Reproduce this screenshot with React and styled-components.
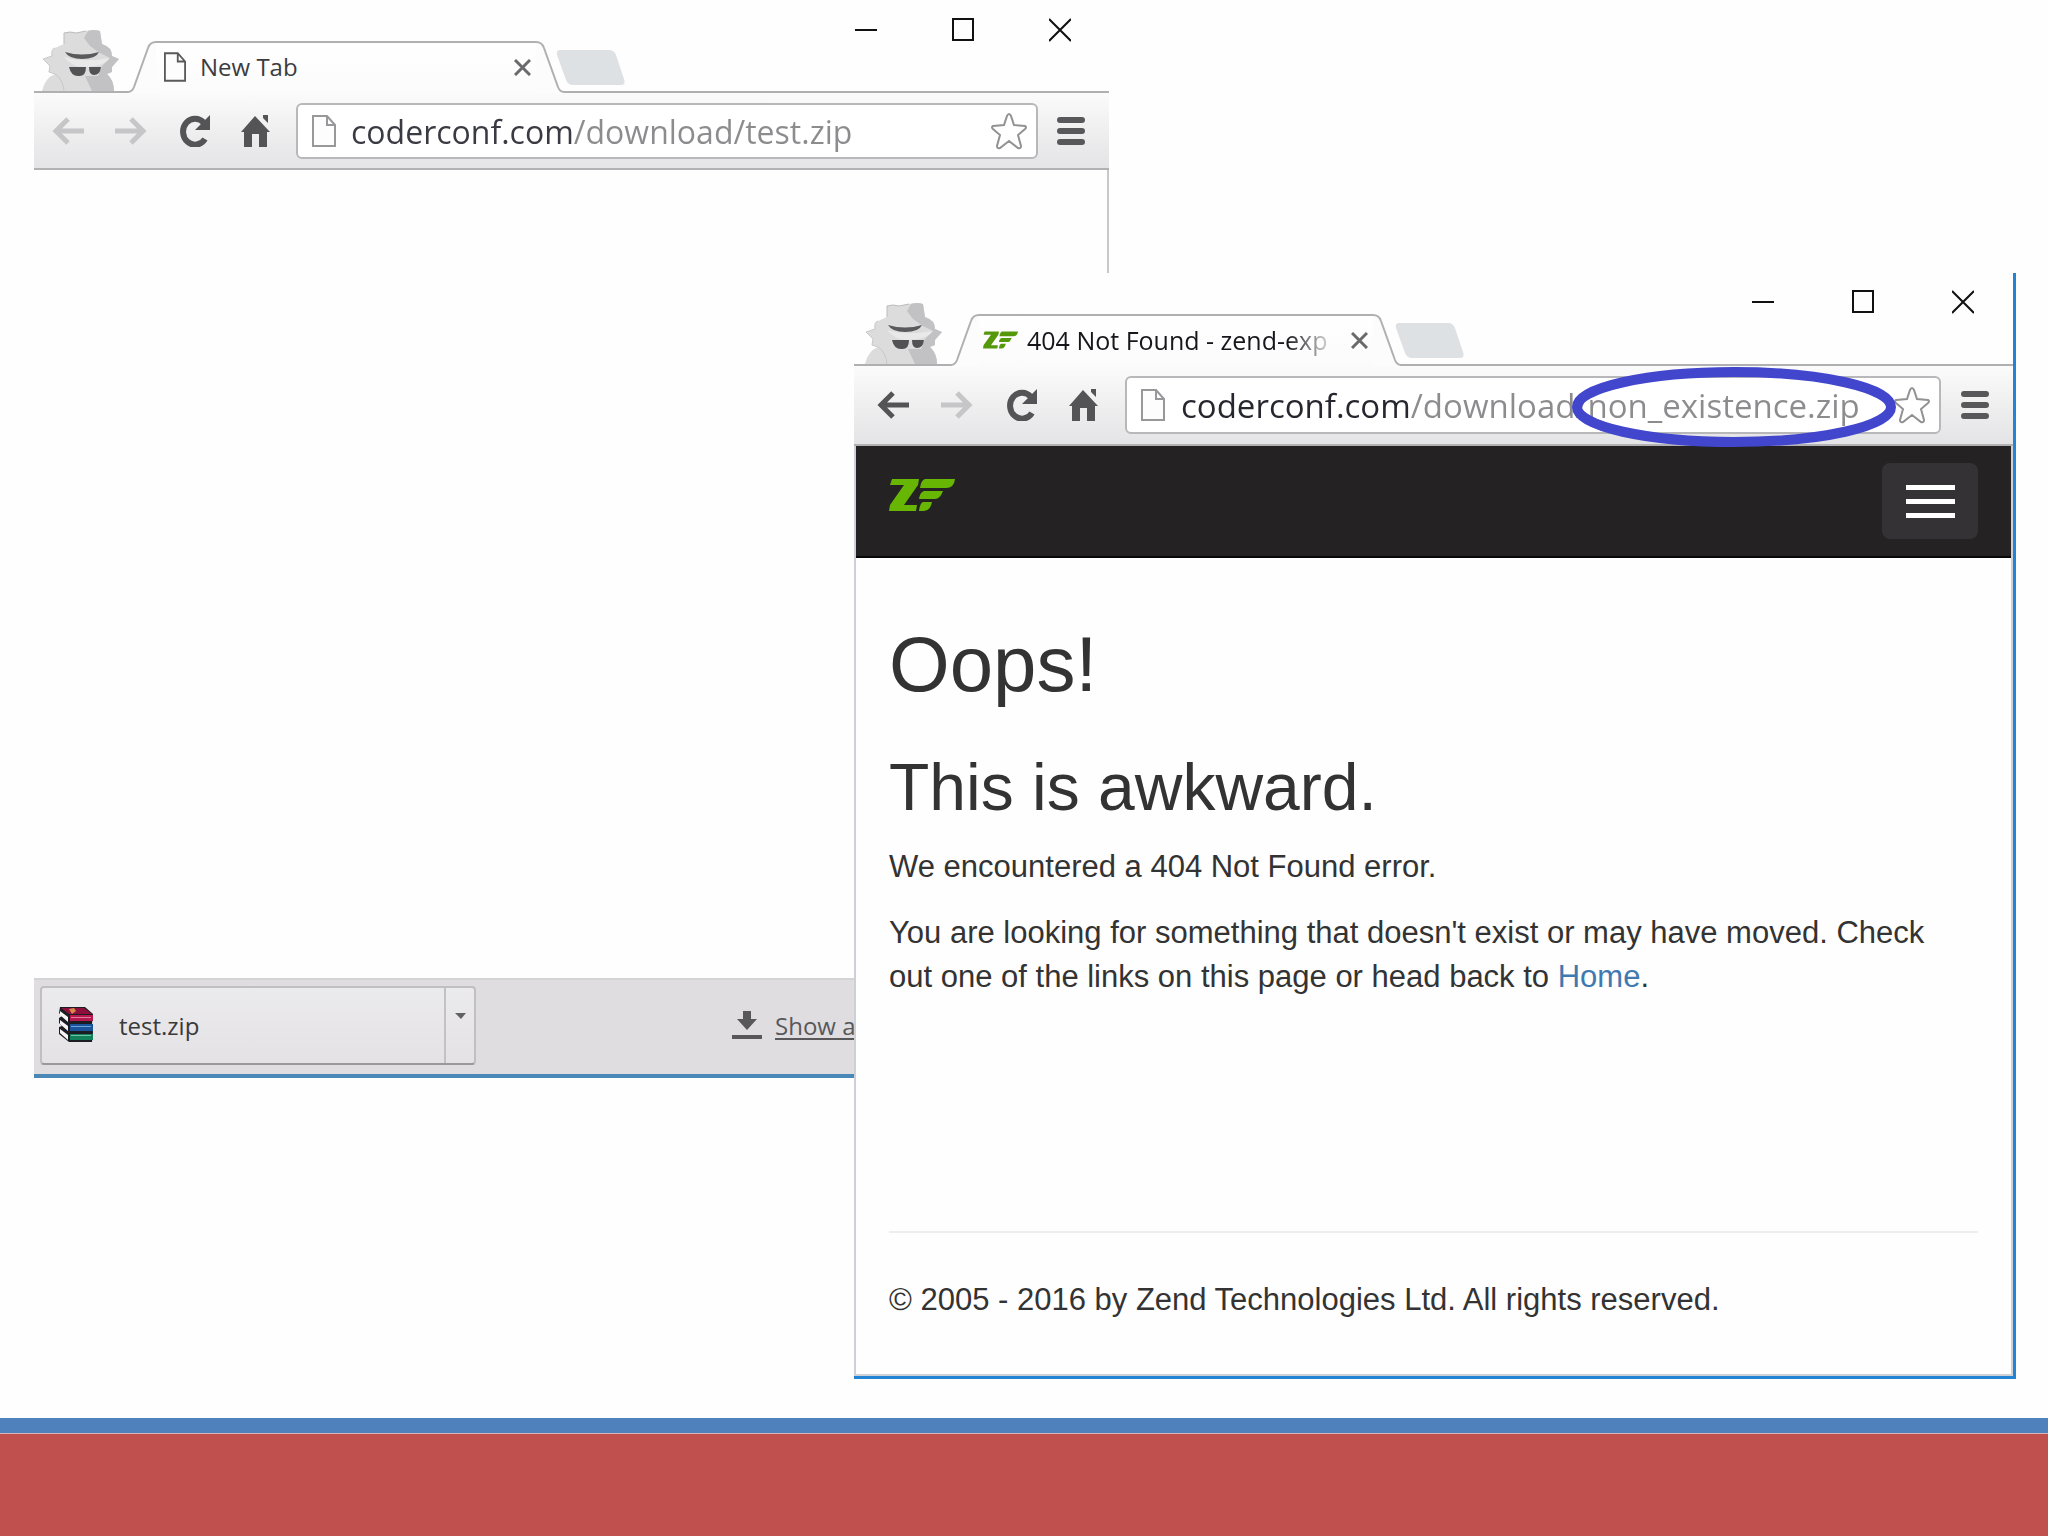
import styled, { createGlobalStyle } from "styled-components";

const GlobalStyle = createGlobalStyle`
  *, *::before, *::after {
    box-sizing: border-box;
  }

  body {
    margin: 0;
    background: #fefefe;
  }

  button {
    padding: 0;
    border: none;
    background: none;
    cursor: pointer;
  }

  svg {
    display: block;
  }
`;

const uiFont = `"Open Sans", "Noto Sans", sans-serif`;
const pageFont = `"Liberation Sans", Arial, sans-serif`;

// Slide
const Slide = styled.div`
  display: flex;
  flex-direction: column;
  min-height: 100vh;
`;

const Canvas = styled.main`
  position: relative;
  flex: 1;
  overflow: hidden;
`;

const Band = styled.footer`
  height: 118px;
  background: #c0504d;
  border-top: 15px solid #4f81bd;
  box-shadow: inset 0 1px 0 #d9b3bb;
`;

// Browser window
const Window = styled.section`
  position: absolute;
  display: flex;
  flex-direction: column;
  background: #fefefe;
  font-family: ${uiFont};
`;

const BackWindow = styled(Window)`
  top: 0;
  left: 34px;
  width: 52.5%;
  height: 76%;
  border-bottom: 4px solid #4a88b8;
`;

const FrontWindow = styled(Window)`
  top: 273px;
  left: 41.7%;
  right: 32px;
  bottom: 39px;
  border-right: 3px solid #2383d5;
  border-bottom: 3px solid #2383d5;
`;

const TitleBar = styled.header`
  display: flex;
  align-items: flex-end;
  height: 93px;
  padding-left: ${(props) => (props.$large ? "11px" : "8px")};
  border-bottom: 2px solid #b0b0b2;
`;

const Tab = styled.div`
  display: flex;
  width: ${(props) => (props.$large ? "450px" : "436px")};
  height: 52px;
  margin-left: 8px;
  margin-bottom: -2px;
`;

const TabBody = styled.div`
  flex: 1;
  min-width: 0;
  display: flex;
  align-items: center;
  gap: ${(props) => (props.$large ? "9px" : "14px")};
  padding: 0 5px 2px ${(props) => (props.$large ? "4px" : "8px")};
  border-top: 2px solid #b0b0b2;
  background: linear-gradient(#ffffff, #fbfbfb);
`;

const TabTitle = styled.span`
  flex: 1;
  overflow: hidden;
  white-space: nowrap;
  font-size: ${(props) => (props.$faded ? "25px" : "24px")};
  line-height: 32px;
  color: ${(props) => (props.$faded ? "#16161c" : "#3c3c40")};
  mask-image: ${(props) =>
    props.$faded
      ? "linear-gradient(to right, #000 260px, rgba(0, 0, 0, 0.2) 300px)"
      : "none"};
`;

const NewTabButton = styled.button`
  margin: 0 0 6px ${(props) => (props.$large ? "-6px" : "-8px")};
`;

const WindowControls = styled.div`
  align-self: flex-start;
  display: flex;
  gap: ${(props) => (props.$large ? "78px" : "75px")};
  margin-left: auto;
  padding: ${(props) => (props.$large ? "17px 39px 0 0" : "18px 38px 0 0")};
`;

const Toolbar = styled.div`
  display: flex;
  align-items: center;
  gap: ${(props) => (props.$large ? "32px" : "31px")};
  padding: 10px 24px ${(props) => (props.$large ? "10px" : "9px")}
    ${(props) => (props.$large ? "23px" : "18px")};
  border-bottom: 2px solid #b2b2b4;
  background: linear-gradient(#fbfbfb, #e4e3e5);
`;

const AddressBar = styled.label`
  flex: 1;
  min-width: 0;
  display: flex;
  align-items: center;
  gap: ${(props) => (props.$large ? "16px" : "15px")};
  height: ${(props) => (props.$large ? "58px" : "56px")};
  margin: 0 -12px 0 -6px;
  padding: 0 8px 0 14px;
  border: 2px solid #b8b8ba;
  border-radius: 6px;
  background: #ffffff;
`;

// The host is dark and the path grey, so the text is filled by a two-tone gradient
const AddressInput = styled.input`
  flex: 1;
  min-width: 0;
  height: 48px;
  padding: 0;
  border: none;
  outline: none;
  font-family: ${uiFont};
  font-size: ${(props) => (props.$large ? "33px" : "32px")};
  color: #8c8c8e;
  -webkit-text-fill-color: transparent;
  background: ${(props) =>
    props.$large
      ? "linear-gradient(to right, #26262e 230px, #8c8c8e 230px)"
      : "linear-gradient(to right, #3a3a42 223px, #8c8c8e 223px)"};
  background-clip: text;
`;

const Highlight = styled.svg`
  position: absolute;
  top: 94px;
  right: 117px;
  pointer-events: none;
`;

const BlankPage = styled.div`
  flex: 1;
  border-right: 2px solid #c8c8ca;
`;

// Download shelf
const DownloadShelf = styled.div`
  display: flex;
  align-items: center;
  height: 96px;
  padding: 6px 6px 9px;
  border-top: 2px solid #d4d3d5;
  background: #dfdde0;
`;

const DownloadItem = styled.div`
  display: flex;
  width: 436px;
  height: 79px;
  border: 2px solid #c0bfc1;
  border-bottom-color: #99989a;
  border-radius: 4px;
  background: linear-gradient(#ebeaec, #e4e2e4);
`;

const FileButton = styled.button`
  flex: 1;
  display: flex;
  align-items: center;
  gap: 25px;
  padding-left: 17px;
  font-family: ${uiFont};
  font-size: 24px;
  color: #3a3a3c;
`;

const CaretButton = styled.button`
  display: flex;
  justify-content: center;
  width: 30px;
  padding-top: 25px;
  border-left: 2px solid #c2c1c3;
`;

const ShowAllLink = styled.a`
  display: flex;
  align-items: center;
  gap: 13px;
  margin-left: 256px;
  font-size: 24px;
  color: #58585a;
  white-space: nowrap;
  text-underline-offset: 3px;
`;

// Error page
const Page = styled.div`
  flex: 1;
  display: flex;
  flex-direction: column;
  border: 2px solid #cdd0d4;
  border-top: none;
  font-family: ${pageFont};
  color: #333333;
`;

const NavBar = styled.nav`
  display: flex;
  align-items: flex-start;
  justify-content: space-between;
  height: 112px;
  padding: 17px 33px;
  border-bottom: 2px solid #080808;
  background: #242223;
`;

const Brand = styled.a`
  padding-top: 16px;
`;

const MenuToggle = styled.button`
  display: flex;
  flex-direction: column;
  align-items: center;
  justify-content: center;
  gap: 9px;
  width: 96px;
  height: 76px;
  border-radius: 8px;
  background: #343235;
`;

const MenuLine = styled.span`
  width: 49px;
  height: 5px;
  background: #ffffff;
`;

const Content = styled.article`
  flex: 1;
  display: flex;
  flex-direction: column;
  padding: 63px 33px 52px;
`;

const Title = styled.h1`
  margin: 0 0 44px;
  font-size: 78px;
  font-weight: 400;
  line-height: 86px;
`;

const Subtitle = styled.h2`
  margin: 0 0 22px;
  font-size: 66px;
  font-weight: 400;
  line-height: 72px;
`;

const Paragraph = styled.p`
  margin: 0 0 22px;
  padding-right: 12px;
  font-size: 31px;
  line-height: 44px;
`;

const HomeLink = styled.a`
  color: #4079b0;
  text-decoration: none;
`;

const Copyright = styled.div`
  margin-top: auto;
  padding-top: 45px;
  border-top: 2px solid #eeeeee;
  font-size: 31px;
  line-height: 44px;
`;

// Icons
function IncognitoIcon() {
  return (
    <svg width="78" height="61" viewBox="0 0 78 61" aria-hidden="true">
      <path d="M0 61 Q3 48 13 44 L7 42 L8 36 L1 29 L10 26 Q9 19 13 18 L22 14 L22 3 Q28 1 34 3 Q40 2 44 1 Q52 -1 58 1 L60 14 Q70 17 70 26 L77 29 L70 37 L70 42 L65 44 Q72 50 72 61 Z" fill="#dcdcdd" />
      <path d="M46 1 Q52 -1 58 1 L60 14 Q70 17 70 26 L77 29 L70 37 L70 42 L65 44 Q72 50 72 61 H50 L43 46 H56 L60 36 L68 28 L58 23 L48 16 L42 8 Z" fill="#c2c2c4" />
      <path d="M22 27 Q42 33 67 28 Q64 36 42 37 Q30 37 22 27 Z" fill="#e9e9ea" />
      <path d="M22 14 V3 Q28 1 34 3 L44 1" fill="none" stroke="#bbbbbd" strokeWidth="1" />
      <path d="M23 22 Q40 27 57 22 Q54 29 40 29 Q27 29 23 22 Z" fill="#5a5a5c" />
      <path d="M27 37 H44 Q44 47 36 46 Q29 46 27 37 Z M47 37 H59 Q58 45 52 45 Q47 45 47 37 Z" fill="#525254" />
      <path d="M13 44 Q21 49 22 61 M13 44 L7 42 L8 36 L1 29 L10 26 Q9 19 13 18" fill="none" stroke="#c8c8ca" strokeWidth="1" />
    </svg>
  );
}

function TabSlope({ flip }) {
  return (
    <svg width="28" height="52" viewBox="0 0 28 52" aria-hidden="true">
      <g transform={flip ? "translate(28 0) scale(-1 1)" : undefined}>
        <path d="M0 52 V51 Q4 51 6 46 L20 7 Q22 1 28 1 V52 Z" fill="#fcfcfc" />
        <path d="M0 51 Q4 51 6 46 L20 7 Q22 1 28 1" fill="none" stroke="#b0b0b2" strokeWidth="2" />
      </g>
    </svg>
  );
}

function NewTabShape() {
  return (
    <svg width="69" height="35" viewBox="0 0 69 35" aria-hidden="true">
      <path d="M4 0 H53 Q58 0 60 5 L68 29 Q70 35 65 35 H17 Q12 35 10 30 L1 5 Q0 0 4 0 Z" fill="#dde1e4" />
    </svg>
  );
}

function PageIcon({ width, height, color }) {
  return (
    <svg width={width} height={height} viewBox="0 0 24 32" aria-hidden="true">
      <path d="M1 1 H15 L23 10 V31 H1 Z M15 1 V10 H23" fill="#fdfdfd" stroke={color} strokeWidth="2" />
    </svg>
  );
}

function ZendLogo({ width, height, color }) {
  return (
    <svg width={width} height={height} viewBox="0 0 66 32" aria-hidden="true">
      <g fill={color}>
        <path d="M3 0 H30 L29 6 L15 26 H28 L27 32 H0 L1 26 L15 6 H1 Z" />
        <path d="M36 0 H66 Q65 9 57 9 H31 Q32 1 36 0 Z" />
        <path d="M35 12 H54 Q51 20 46 20 H30 Q31 13 35 12 Z" />
        <path d="M34 23 H43 Q41 32 35 32 H30 Q31 24 34 23 Z" />
      </g>
    </svg>
  );
}

function CloseTabIcon() {
  return (
    <svg width="17" height="17" viewBox="0 0 17 17" aria-hidden="true">
      <path d="M1 1 L16 16 M16 1 L1 16" stroke="#6a6a6c" strokeWidth="3" />
    </svg>
  );
}

function ArrowIcon({ flip, color }) {
  return (
    <svg width="32" height="28" viewBox="0 0 32 28" aria-hidden="true">
      <path
        d="M3 14 H32 M16 2 L4 14 L16 26"
        transform={flip ? "translate(32 0) scale(-1 1)" : undefined}
        fill="none"
        stroke={color}
        strokeWidth="5"
      />
    </svg>
  );
}

function ReloadIcon() {
  return (
    <svg width="32" height="32" viewBox="0 0 32 32" aria-hidden="true">
      <path d="M26 8 A12 13 0 1 0 27 24" fill="none" stroke="#545456" strokeWidth="6" />
      <path d="M32 0 V15 H17 Z" fill="#545456" />
    </svg>
  );
}

function HomeIcon() {
  return (
    <svg width="30" height="32" viewBox="0 0 30 32" aria-hidden="true">
      <path d="M14 1 L29 17 H26 V32 H18 V19 H11 V32 H3 V17 H0 Z M22 0 H27 V8 L22 3 Z" fill="#545456" />
    </svg>
  );
}

function StarIcon() {
  return (
    <svg width="38" height="38" viewBox="0 0 38 38" aria-hidden="true">
      <path
        d="M19 2 Q20 2 21 4 L24 13 L35 14 Q37 15 35 17 L28 23 L31 34 Q31 37 28 36 L19 29 L10 36 Q7 37 7 34 L10 23 L3 17 Q1 15 3 14 L14 13 L17 4 Q18 2 19 2 Z"
        fill="#ffffff"
        stroke="#929294"
        strokeWidth="2"
      />
    </svg>
  );
}

function MenuIcon() {
  return (
    <svg width="28" height="28" viewBox="0 0 28 28" aria-hidden="true">
      <path d="M3 3 H25 M3 14 H25 M3 25 H25" stroke="#58585a" strokeWidth="6" strokeLinecap="round" />
    </svg>
  );
}

function ControlIcon({ path }) {
  return (
    <svg width="22" height="24" viewBox="0 0 22 24" aria-hidden="true">
      <path d={path} fill="none" stroke="#111111" strokeWidth="2" />
    </svg>
  );
}

function ArchiveIcon() {
  return (
    <svg width="35" height="36" viewBox="0 0 35 36" aria-hidden="true">
      <path d="M1 0 H26 L34 7 L33 17 L34 25 L33 35 H10 L0 27 V20 L3 19 L0 16 V11 L3 9 L0 6 Z" fill="#1c1c24" />
      <path d="M2 1 H25 L33 7 H10 Z" fill="#8e0f3c" />
      <path d="M11 8 H34 V14 H11 Z" fill="#b8184e" />
      <path d="M12 10 H32 V11 H12 Z" fill="#e2799a" />
      <path d="M10 2 L15 1 L17 4 L13 7 Z" fill="#d98a4a" />
      <path d="M11 17 H34 V24 H11 Z" fill="#1c549c" />
      <path d="M12 19 H32 V20 H12 Z" fill="#6ba3dc" />
      <path d="M11 27 H34 V33 H11 Z" fill="#12805a" />
      <path d="M12 28 H32 V29 H12 Z" fill="#6cc4a0" />
      <path d="M1 4 L9 10 V15 L1 8 Z M1 13 L9 19 V24 L1 17 Z M1 22 L9 28 V33 L1 26 Z" fill="#f6f4f4" />
    </svg>
  );
}

function DownloadIcon() {
  return (
    <svg width="30" height="28" viewBox="0 0 30 28" aria-hidden="true">
      <path d="M11 0 H19 V8 H25 L15 19 L5 8 H11 Z M0 24 H30 V28 H0 Z" fill="#58585a" />
    </svg>
  );
}

const controls = [
  { label: "Minimize", path: "M0 12 H22" },
  { label: "Maximize", path: "M1 1 H21 V22 H1 Z" },
  { label: "Close", path: "M0 1 L22 23 M22 1 L0 23" },
];

function BrowserChrome({ large, title, favicon, url, canGoBack }) {
  return (
    <>
      <TitleBar $large={large}>
        <IncognitoIcon />
        <Tab $large={large}>
          <TabSlope />
          <TabBody $large={large}>
            {favicon}
            <TabTitle $faded={large}>{title}</TabTitle>
            <button type="button" aria-label="Close tab">
              <CloseTabIcon />
            </button>
          </TabBody>
          <TabSlope flip />
        </Tab>
        <NewTabButton $large={large} type="button" aria-label="New tab">
          <NewTabShape />
        </NewTabButton>
        <WindowControls $large={large}>
          {controls.map((control) => (
            <button type="button" key={control.label} aria-label={control.label}>
              <ControlIcon path={control.path} />
            </button>
          ))}
        </WindowControls>
      </TitleBar>
      <Toolbar $large={large}>
        <button type="button" aria-label="Back">
          <ArrowIcon color={canGoBack ? "#545456" : "#c6c6c8"} />
        </button>
        <button type="button" aria-label="Forward">
          <ArrowIcon flip color="#c6c6c8" />
        </button>
        <button type="button" aria-label="Reload">
          <ReloadIcon />
        </button>
        <button type="button" aria-label="Home">
          <HomeIcon />
        </button>
        <AddressBar $large={large}>
          <PageIcon width={24} height={32} color="#98989a" />
          <AddressInput $large={large} type="text" aria-label="Address" defaultValue={url} />
          <button type="button" aria-label="Bookmark">
            <StarIcon />
          </button>
        </AddressBar>
        <button type="button" aria-label="Menu">
          <MenuIcon />
        </button>
      </Toolbar>
    </>
  );
}

function App() {
  return (
    <Slide>
      <GlobalStyle />
      <Canvas>
        <BackWindow>
          <BrowserChrome
            title="New Tab"
            favicon={<PageIcon width={22} height={30} color="#5a5a5c" />}
            url="coderconf.com/download/test.zip"
          />
          <BlankPage />
          <DownloadShelf>
            <DownloadItem>
              <FileButton type="button">
                <ArchiveIcon />
                test.zip
              </FileButton>
              <CaretButton type="button" aria-label="Download options">
                <svg width="11" height="6" viewBox="0 0 11 6" aria-hidden="true">
                  <path d="M0 0 H11 L6 6 Z" fill="#626264" />
                </svg>
              </CaretButton>
            </DownloadItem>
            <ShowAllLink href="#">
              <DownloadIcon />
              Show all
            </ShowAllLink>
          </DownloadShelf>
        </BackWindow>

        <FrontWindow>
          <BrowserChrome
            large
            canGoBack
            title="404 Not Found - zend-exp"
            favicon={<ZendLogo width={35} height={18} color="#56980c" />}
            url="coderconf.com/download/non_existence.zip"
          />
          <Highlight width="324" height="80" viewBox="0 0 324 80" aria-hidden="true">
            <ellipse cx="162" cy="40" rx="157" ry="35" fill="none" stroke="#4146cc" strokeWidth="10" />
          </Highlight>
          <Page>
            <NavBar>
              <Brand href="#" aria-label="Zend Framework">
                <ZendLogo width={66} height={32} color="#68b604" />
              </Brand>
              <MenuToggle type="button" aria-label="Toggle navigation">
                <MenuLine />
                <MenuLine />
                <MenuLine />
              </MenuToggle>
            </NavBar>
            <Content>
              <Title>Oops!</Title>
              <Subtitle>This is awkward.</Subtitle>
              <Paragraph>We encountered a 404 Not Found error.</Paragraph>
              <Paragraph>
                You are looking for something that doesn't exist or may have moved. Check out one of
                the links on this page or head back to <HomeLink href="#">Home</HomeLink>.
              </Paragraph>
              <Copyright>© 2005 - 2016 by Zend Technologies Ltd. All rights reserved.</Copyright>
            </Content>
          </Page>
        </FrontWindow>
      </Canvas>
      <Band />
    </Slide>
  );
}

export default App;
